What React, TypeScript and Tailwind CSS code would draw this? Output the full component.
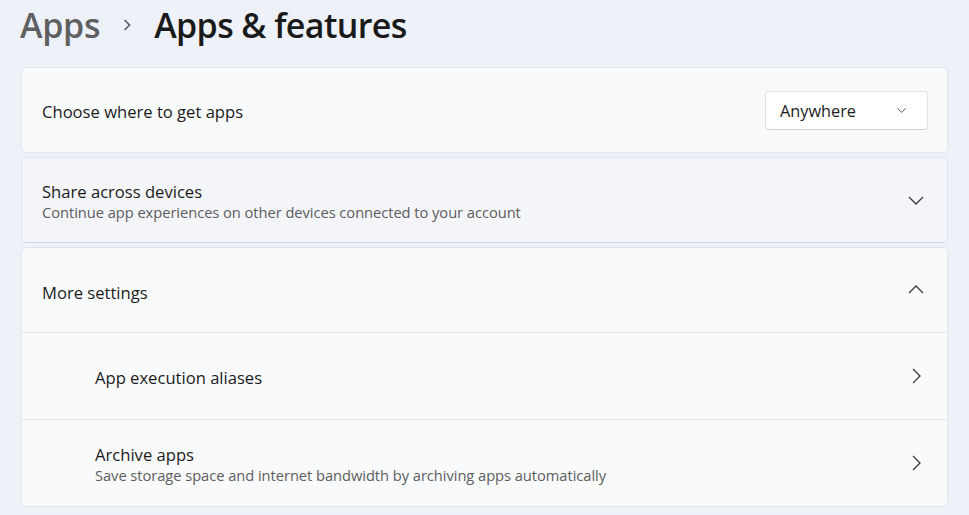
import { ChevronDown } from "lucide-react";

const font = { fontFamily: '"Open Sans", "Noto Sans", sans-serif' };

// thin Fluent-style chevrons, drawn to the reference size
function Chevron({ dir }: { dir: "down" | "up" | "right" }) {
  if (dir === "right")
    return (
      <svg width="16" height="16" viewBox="0 0 16 16" className="text-[#3a3a3a]">
        <path d="M5 1 L12 8 L5 15" fill="none" stroke="currentColor" strokeWidth="1.3" />
      </svg>
    );
  const d = dir === "down" ? "M1 5 L8 12 L15 5" : "M1 11 L8 4 L15 11";
  return (
    <svg width="16" height="16" viewBox="0 0 16 16" className="text-[#3a3a3a]">
      <path d={d} fill="none" stroke="currentColor" strokeWidth="1.3" />
    </svg>
  );
}

export default function App() {
  return (
    <div
      className="w-[969px] h-[515px] overflow-hidden bg-[#eef2f8] text-[#1b1b1b]"
      style={font}
    >
      <div className="flex items-center h-[48px] pl-[20px] pt-[2px]">
        <span className="text-[34px] font-semibold text-[#5f6062] tracking-[-0.3px]">Apps</span>
        <svg width="14" height="14" viewBox="0 0 14 14" className="ml-[20px] mt-[-1px] text-[#5f6062]">
          <path d="M4.5 2 L9.5 7 L4.5 12" fill="none" stroke="currentColor" strokeWidth="1.7" />
        </svg>
        <span className="text-[34px] font-semibold text-[#1a1a1a] tracking-[-0.6px] ml-[20px]">
          Apps &amp; features
        </span>
      </div>

      <div className="flex flex-col gap-[4px] mx-[21px] mt-[19px] w-[927px]">
        {/* choose where */}
        <div className="h-[86px] rounded-[5px] border border-[#e3e5e8] bg-[#f9fafc] flex items-center justify-between pl-[20px] pr-[19px]">
          <span className="text-[16.6px] mt-[5px]">Choose where to get apps</span>
          <div className="w-[163px] h-[39px] rounded-[4px] border border-[#dfe1e4] border-b-[#cfd1d4] bg-white flex items-center justify-between pl-[14px] pr-[18px]">
            <span className="text-[16.3px] mt-[2px]">Anywhere</span>
            <ChevronDown className="w-[15px] h-[15px] text-[#4a4a4a]" strokeWidth={1.5} />
          </div>
        </div>

        {/* share */}
        <div className="h-[86px] rounded-[5px] border border-[#dfe2e6] border-b-[#d2d5d9] bg-[#f3f5f8] flex items-center justify-between pl-[20px] pr-[23px]">
          <div className="flex flex-col pt-[3px]">
            <span className="text-[16.6px] leading-[22px]">Share across devices</span>
            <span className="text-[14.7px] leading-[19px] text-[#5d5d5d] tracking-[-0.05px]">
              Continue app experiences on other devices connected to your account
            </span>
          </div>
          <Chevron dir="down" />
        </div>

        {/* more settings */}
        <div className="h-[260px] rounded-[5px] border border-[#e3e5e8] bg-[#f9fafc] flex flex-col">
          <div className="h-[85px] flex items-center justify-between pl-[20px] pr-[23px] border-b border-[#e4e6e9]">
            <span className="text-[16.6px] mt-[6px]">More settings</span>
            <Chevron dir="up" />
          </div>
          <div className="h-[87px] flex items-center justify-between pl-[73px] pr-[23px] border-b border-[#e4e6e9]">
            <span className="text-[16.6px] mt-[4px]">App execution aliases</span>
            <Chevron dir="right" />
          </div>
          <div className="flex-1 flex items-center justify-between pl-[73px] pr-[23px]">
            <div className="flex flex-col pt-[2px]">
              <span className="text-[16.6px] leading-[22px]">Archive apps</span>
              <span className="text-[14.7px] leading-[19px] text-[#5d5d5d] tracking-[-0.05px]">
                Save storage space and internet bandwidth by archiving apps automatically
              </span>
            </div>
            <Chevron dir="right" />
          </div>
        </div>
      </div>
    </div>
  );
}
